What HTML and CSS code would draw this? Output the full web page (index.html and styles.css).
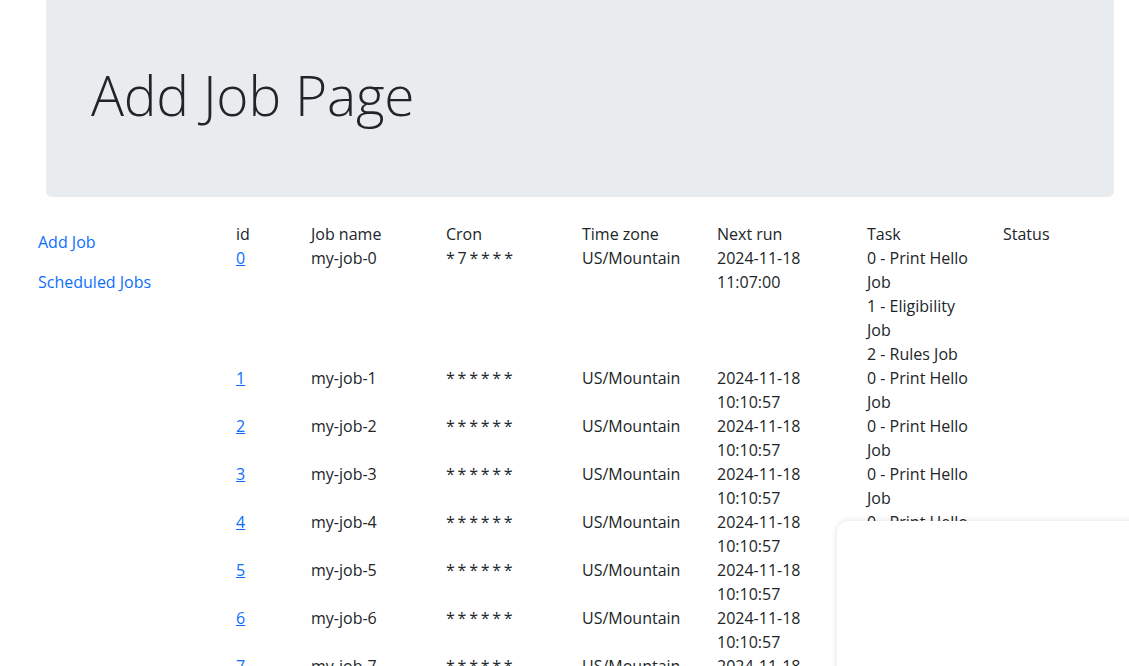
FILE: index.html
```html
<!DOCTYPE html>
<html lang="en">
<head>
<meta charset="utf-8">
<title>Add Job Page</title>
<link rel="stylesheet" href="styles.css">
</head>
<body>
<div class="page">
  <header class="jumbotron">
    <h1 class="display">Add Job Page</h1>
  </header>
  <div class="main">
    <nav class="sidebar">
      <a class="nav-link" href="#">Add Job</a>
      <a class="nav-link" href="#">Scheduled Jobs</a>
    </nav>
    <table class="jobs">
      <colgroup>
        <col class="c-id"><col class="c-name"><col class="c-cron"><col class="c-tz"><col class="c-next"><col class="c-task"><col class="c-status">
      </colgroup>
      <thead>
        <tr><th>id</th><th>Job name</th><th>Cron</th><th>Time zone</th><th>Next run</th><th>Task</th><th>Status</th></tr>
      </thead>
      <tbody>
        <tr><td><a href="#">0</a></td><td>my-job-0</td><td class="cron">* 7 * * * *</td><td>US/Mountain</td><td><div class="wrap-next">2024-11-18 11:07:00</div></td><td><div class="wrap-task">0 - Print Hello Job</div><div class="wrap-task">1 - Eligibility Job</div><div class="wrap-task">2 - Rules Job</div></td><td></td></tr>
        <tr><td><a href="#">1</a></td><td>my-job-1</td><td class="cron">* * * * * *</td><td>US/Mountain</td><td><div class="wrap-next">2024-11-18 10:10:57</div></td><td><div class="wrap-task">0 - Print Hello Job</div></td><td></td></tr>
        <tr><td><a href="#">2</a></td><td>my-job-2</td><td class="cron">* * * * * *</td><td>US/Mountain</td><td><div class="wrap-next">2024-11-18 10:10:57</div></td><td><div class="wrap-task">0 - Print Hello Job</div></td><td></td></tr>
        <tr><td><a href="#">3</a></td><td>my-job-3</td><td class="cron">* * * * * *</td><td>US/Mountain</td><td><div class="wrap-next">2024-11-18 10:10:57</div></td><td><div class="wrap-task">0 - Print Hello Job</div></td><td></td></tr>
        <tr><td><a href="#">4</a></td><td>my-job-4</td><td class="cron">* * * * * *</td><td>US/Mountain</td><td><div class="wrap-next">2024-11-18 10:10:57</div></td><td><div class="wrap-task">0 - Print Hello Job</div></td><td></td></tr>
        <tr><td><a href="#">5</a></td><td>my-job-5</td><td class="cron">* * * * * *</td><td>US/Mountain</td><td><div class="wrap-next">2024-11-18 10:10:57</div></td><td><div class="wrap-task">0 - Print Hello Job</div></td><td></td></tr>
        <tr><td><a href="#">6</a></td><td>my-job-6</td><td class="cron">* * * * * *</td><td>US/Mountain</td><td><div class="wrap-next">2024-11-18 10:10:57</div></td><td><div class="wrap-task">0 - Print Hello Job</div></td><td></td></tr>
        <tr><td><a href="#">7</a></td><td>my-job-7</td><td class="cron">* * * * * *</td><td>US/Mountain</td><td><div class="wrap-next">2024-11-18 10:10:57</div></td><td><div class="wrap-task">0 - Print Hello Job</div></td><td></td></tr>
      </tbody>
    </table>
  </div>
  <div class="overlay-panel"></div>
</div>
</body>
</html>
```

FILE: styles.css
```css
html, body {
  margin: 0;
  padding: 0;
  overflow: hidden;
}
body {
  font-family: "Open Sans", "Noto Sans", sans-serif;
  font-size: 16px;
  line-height: 24px;
  color: #212529;
  background: #fff;
}
.page {
  position: relative;
  height: 666px;
  overflow: hidden;
}
.jumbotron {
  margin: 0 15px 0 46px;
  height: 197px;
  box-sizing: border-box;
  background: #e9ecef;
  border-radius: 0 0 6px 6px;
  padding: 62px 0 0 45px;
}
.display {
  margin: 0;
  font-size: 55px;
  font-weight: 300;
  line-height: 1.2;
  letter-spacing: -0.2px;
}
.main {
  display: flex;
  margin-top: 25px;
  padding-left: 22px;
}
.sidebar {
  width: 214px;
  flex: none;
  display: flex;
  flex-direction: column;
}
.nav-link {
  display: block;
  padding: 8px 16px;
  color: #0d6efd;
  text-decoration: none;
}
.jobs {
  border-collapse: collapse;
  table-layout: fixed;
  width: 893px;
}
.jobs th, .jobs td {
  padding: 0;
  text-align: left;
  font-weight: 400;
  vertical-align: top;
}
.jobs td.cron {
  letter-spacing: -0.4px;
  word-spacing: -0.6px;
}
.jobs a {
  color: #0d6efd;
  text-decoration: underline;
}
.c-id { width: 75px; }
.c-name { width: 135px; }
.c-cron { width: 136px; }
.c-tz { width: 135px; }
.c-next { width: 150px; }
.c-task { width: 136px; }
.c-status { width: 126px; }
.wrap-next { width: 100px; }
.wrap-task { width: 112px; }
.overlay-panel {
  position: absolute;
  left: 837px;
  top: 521px;
  width: 320px;
  height: 200px;
  background: #fff;
  border-radius: 12px 0 0 0;
  box-shadow: 0 0 6px rgba(0, 0, 0, 0.12);
}
```
